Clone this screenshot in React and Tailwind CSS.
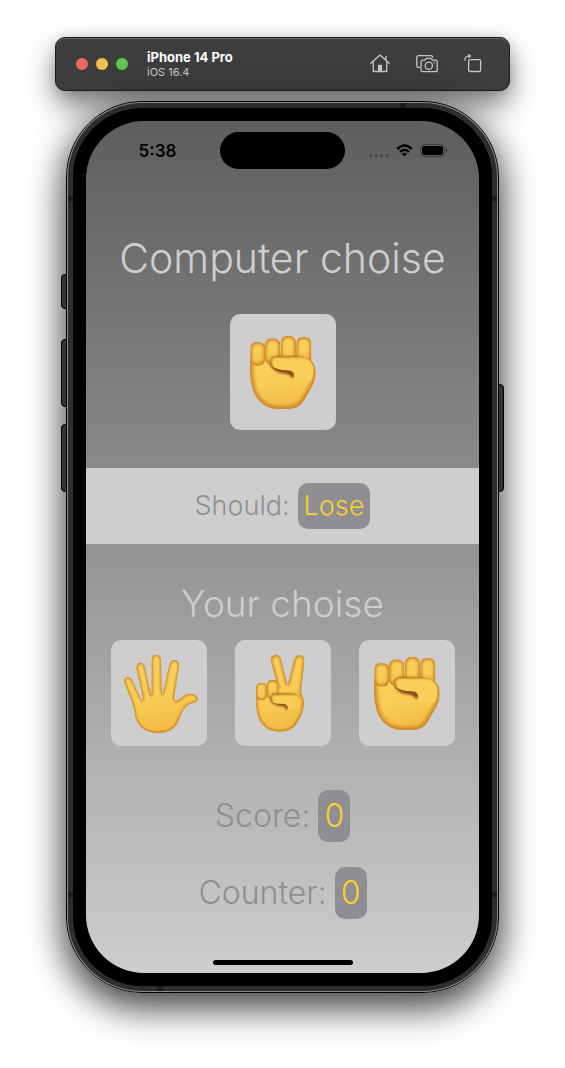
import { useId } from "react";

function Blob({ d, shade = 9 }) {
  const id = useId();
  return (
    <g>
      <defs>
        <clipPath id={`${id}c`}>
          <path d={d} />
        </clipPath>
        <linearGradient id={`${id}g`} x1="0" y1="0" x2="0.25" y2="1">
          <stop offset="0" stopColor="#fbd35c" />
          <stop offset="0.6" stopColor="#f8cd55" />
          <stop offset="1" stopColor="#f3bd45" />
        </linearGradient>
        <filter id={`${id}b`} x="-20%" y="-20%" width="140%" height="140%">
          <feGaussianBlur stdDeviation={shade / 2} />
        </filter>
      </defs>
      <path d={d} fill={`url(#${id}g)`} />
      <g clipPath={`url(#${id}c)`}>
        <path d={d} fill="none" stroke="#c07420" strokeWidth={shade} filter={`url(#${id}b)`} />
        <path d={d} fill="none" stroke="#c98324" strokeWidth="2" opacity="0.5" />
      </g>
    </g>
  );
}

function Thumb({ d, top, crease, from, to }) {
  const id = useId();
  return (
    <g>
      <defs>
        <filter id={`${id}b`} x="-40%" y="-80%" width="180%" height="260%">
          <feGaussianBlur stdDeviation="2.5" />
        </filter>
        <linearGradient id={`${id}g`} gradientUnits="userSpaceOnUse" x1={from} y1="0" x2={to} y2="0">
          <stop offset="0" stopColor="#f9cf59" />
          <stop offset="1" stopColor="#f9cf59" stopOpacity="0" />
        </linearGradient>
        <linearGradient id={`${id}s`} gradientUnits="userSpaceOnUse" x1={from} y1="0" x2={to} y2="0">
          <stop offset="0" stopColor="#a9651c" />
          <stop offset="1" stopColor="#c98324" stopOpacity="0.5" />
        </linearGradient>
      </defs>
      <path d={crease} fill="#8f4a12" filter={`url(#${id}b)`} />
      <path d={d} fill={`url(#${id}g)`} />
      <path d={top} fill="none" stroke={`url(#${id}s)`} strokeWidth="4" filter={`url(#${id}b)`} />
      <path d={top} fill="none" stroke={`url(#${id}s)`} strokeWidth="2" opacity="0.8" />
    </g>
  );
}

function Rock() {
  return (
    <svg viewBox="52 66 240 240" className="size-20" aria-hidden="true">
      <Blob shade={14} d="M73 138C72 190 74 225 86 250C100 280 124 297 160 297H184C214 297 228 286 240 262C256 236 270 216 270 187C269 166 262 153 248 146L230 130H90Z" />
      <Blob d="M212 103Q212 81 234 81Q257 81 257 103V148Q256 160 240 160H228Q212 158 212 142Z" />
      <Blob d="M165 101Q165 77 188 77Q211 77 211 101V146Q211 160 188 160Q165 160 165 146Z" />
      <Blob d="M118 108Q118 85 141 85Q164 85 164 108V145Q164 163 141 166Q119 163 118 145Z" />
      <Blob d="M74 117Q74 96 96 96Q119 96 119 117V144Q119 166 98 167Q74 166 74 144Z" />
      <path d="M150 142H226Q254 146 262 168Q266 190 256 214H206Q206 190 190 180Z" fill="#f9cf59" />
      <Thumb
        d="M140 168Q132 156 136 147Q141 140 151 140H222Q240 142 250 150L236 205H206Q210 182 187 181Q155 181 140 168Z"
        top="M140 168Q132 156 136 147Q141 140 151 140H222Q244 142 253 150"
        crease="M132 164Q144 184 168 190Q190 190 200 204Q208 203 207 190Q202 179 187 178Z"
        from={205}
        to={245}
      />
    </svg>
  );
}

function Paper() {
  return (
    <svg viewBox="41 52 240 240" className="size-20" aria-hidden="true">
      <Blob
        shade={6}
        d="M90 245Q88 220 80 198L58 143Q53 128 66 125Q76 124 81 135L105 186Q108 193 112 194Q114 192 112 184L94 100Q91 84 104 81Q116 81 119 94L136 175Q138 181 139 173V72Q140 57 153 57Q166 57 167 72L169 166Q170 180 173 171L193 86Q197 71 210 73Q223 77 221 92L207 180Q205 194 213 195Q219 195 227 187Q242 173 258 174Q278 179 278 190Q277 200 262 202Q239 208 228 234Q222 250 216 262Q202 292 155 292Q104 290 90 245Z"
      />
    </svg>
  );
}

function Scissors() {
  return (
    <svg viewBox="38 52 240 240" className="size-20" aria-hidden="true">
      <Blob
        shade={8}
        d="M84 245Q76 220 77 178L100 165L143 155L122 78Q119 61 134 57Q147 56 152 70L169 139Q172 152 175 139L191 73Q195 58 209 58Q223 61 222 76L212 172Q224 190 220 212Q218 234 202 258Q188 288 145 288Q101 287 84 245Z"
      />
      <Blob shade={7} d="M109 150Q109 133 127 133Q145 133 145 150V175Q144 190 127 190Q110 190 109 175Z" />
      <Blob shade={7} d="M77 158Q77 141 94 141Q110 141 110 158V177Q109 193 94 194Q77 193 77 177Z" />
      <Thumb
        d="M126 198Q118 186 124 179Q129 175 137 175H188Q203 177 212 188L200 222H173Q175 206 160 204Q136 206 126 198Z"
        top="M126 198Q118 186 124 179Q129 175 137 175H188Q203 177 212 188"
        crease="M118 193Q128 208 148 211Q164 210 170 223Q175 222 174 210Q170 202 160 200Z"
        from={175}
        to={208}
      />
    </svg>
  );
}

function HomeIcon() {
  return (
    <svg width="20" height="20" viewBox="0 0 20 20" fill="none" stroke="#c6c6c6" strokeWidth="1.3" strokeLinecap="round" strokeLinejoin="round" aria-hidden="true">
      <path d="M.8 9.3 10 .9 19.2 9.3M3.3 7.8V17.5H16.7V7.8M16 5.6V2.4" />
      <path d="M8 17.5V10.8H12V17.5Z" fill="#c6c6c6" stroke="none" />
    </svg>
  );
}

function CameraIcon() {
  return (
    <svg width="22" height="20" viewBox="0 0 22 20" fill="none" stroke="#c6c6c6" strokeWidth="1.3" strokeLinecap="round" strokeLinejoin="round" aria-hidden="true">
      <path d="M3.5 13.3H2.2Q.8 13.3.8 11.7V3.3Q.8 1.7 2.4 1.7H15.2Q16.6 1.7 16.8 3.1" />
      <path d="M6.8 6.1H9L10.3 4.3H15.1L16.4 6.1H19.3Q21.2 6.1 21.2 7.9V15.9Q21.2 17.7 19.3 17.7H6.8Q5 17.7 5 15.9V7.9Q5 6.1 6.8 6.1Z" />
      <circle cx="12.8" cy="11.8" r="3.6" />
      <circle cx="18" cy="8.8" r=".7" fill="#c6c6c6" stroke="none" />
    </svg>
  );
}

function RotateIcon() {
  return (
    <svg width="18" height="20" viewBox="0 0 18 20" fill="none" stroke="#c6c6c6" strokeWidth="1.3" strokeLinecap="round" strokeLinejoin="round" aria-hidden="true">
      <rect x="4.6" y="5.7" width="12" height="11.8" rx="1.4" />
      <path d="M.8 6.2Q.8 2.2 5.6 1.9" />
      <path d="M4.6.2 7.2 1.9 4.8 4Z" fill="#c6c6c6" strokeWidth=".5" />
    </svg>
  );
}

function StatusIcons() {
  return (
    <div className="flex items-center gap-[7px]">
      <svg width="20" height="14" viewBox="0 0 20 14" fill="#4a4a4a" aria-hidden="true">
        <circle cx="2" cy="11.5" r="1.7" />
        <circle cx="7.3" cy="11.5" r="1.7" />
        <circle cx="12.7" cy="11.5" r="1.7" />
        <circle cx="18" cy="11.5" r="1.7" />
      </svg>
      <svg width="17" height="13" viewBox="0 0 17 13" aria-label="Wi-Fi">
        <path d="M1.2 5Q8.5-1.8 15.8 5" fill="none" stroke="#000" strokeWidth="2.4" />
        <path d="M4 7.9Q8.5 3.9 13 7.9" fill="none" stroke="#000" strokeWidth="2.3" />
        <path d="M5.9 9.9Q8.5 7.8 11.1 9.9L8.5 12.6Z" />
      </svg>
      <svg width="28" height="13" viewBox="0 0 28 13" aria-label="Battery">
        <rect x=".6" y=".6" width="24" height="11.8" rx="3.8" fill="none" stroke="#000" strokeOpacity=".4" />
        <rect x="2.1" y="2.1" width="21" height="8.8" rx="2.5" />
        <path d="M26 4.5V8.5Q27.3 8 27.3 6.5T26 4.5Z" fillOpacity=".45" />
      </svg>
    </div>
  );
}

function Toolbar() {
  return (
    <header className="flex w-full max-w-[455px] items-center rounded-[10px] border border-[#1c1c1c] bg-[#3d3d3d] py-[11px] pr-[27px] pl-5 shadow-[inset_0_1px_0_#666,0_0_12px_rgba(0,0,0,0.12),0_14px_28px_rgba(0,0,0,0.5)]">
      <div className="flex gap-2">
        <button type="button" aria-label="Close" className="size-3 rounded-full bg-[#ed6a5e]" />
        <button type="button" aria-label="Minimize" className="size-3 rounded-full bg-[#f5bf4f]" />
        <button type="button" aria-label="Zoom" className="size-3 rounded-full bg-[#61c554]" />
      </div>
      <div className="ml-[19px] flex-1">
        <h1 className="text-[13px] leading-4 font-bold text-white">iPhone 14 Pro</h1>
        <p className="text-[11px] leading-[14px] text-[#c9c9c9]">iOS 16.4</p>
      </div>
      <div className="flex items-center gap-[26px]">
        <button type="button" aria-label="Home"><HomeIcon /></button>
        <button type="button" aria-label="Screenshot"><CameraIcon /></button>
        <button type="button" aria-label="Rotate"><RotateIcon /></button>
      </div>
    </header>
  );
}

function Stat({ label, value }) {
  return (
    <p className="flex items-center justify-center gap-2 text-[32px] leading-[52px] font-light text-[#8e8e93]">
      {label}
      <span className="rounded-[10px] bg-[#8e8e93] px-1.5 text-[#fbd02f]">{value}</span>
    </p>
  );
}

const choices = [
  { name: "Paper", Icon: Paper },
  { name: "Scissors", Icon: Scissors },
  { name: "Rock", Icon: Rock },
];

function GameScreen() {
  return (
    <main className="flex flex-col items-center overflow-hidden rounded-[58px] bg-linear-to-b from-[#5e5e5e] to-[#cecece] pb-2">
      <div className="grid w-full grid-cols-[1fr_125px_1fr] items-center pt-[11px]">
        <time className="pl-[9px] text-center text-[17px] leading-5 font-semibold text-black">5:38</time>
        <div className="h-[37px] rounded-full bg-black" />
        <div className="flex justify-center pr-2"><StatusIcons /></div>
      </div>
      <h2 className="mt-[63px] text-[41px] leading-[52px] font-light text-[#cecece]">Computer choise</h2>
      <div role="img" aria-label="Rock" className="mt-[30px] rounded-[10px] bg-[#cecece] px-[13px] py-[18px]">
        <Rock />
      </div>
      <p className="mt-[38px] flex w-full items-center justify-center gap-2 bg-[#cecece] py-[15px] text-[27px] leading-[46px] font-light text-[#8e8e93]">
        Should:
        <span className="rounded-[10px] bg-[#8e8e93] px-1.5 text-[#fbd02f]">Lose</span>
      </p>
      <h2 className="mt-9 text-[37px] leading-[48px] font-light text-[#cecece]">Your choise</h2>
      <div className="mt-3 flex gap-7">
        {choices.map(({ name, Icon }) => (
          <button key={name} type="button" aria-label={name} className="rounded-[10px] bg-[#cecece] px-2 py-[13px]">
            <Icon />
          </button>
        ))}
      </div>
      <div className="mt-11 flex flex-col gap-[25px]">
        <Stat label="Score:" value={0} />
        <Stat label="Counter:" value={0} />
      </div>
      <div className="mt-[41px] h-[5px] w-[140px] rounded-full bg-black" />
    </main>
  );
}

export default function App() {
  return (
    <div className="flex min-h-screen flex-col items-center gap-[10px] overflow-hidden bg-white px-5 pt-[37px] pb-[75px] font-[Inter,'Liberation_Sans',sans-serif]">
      <Toolbar />
      <div className="relative w-full max-w-[433px] rounded-[76px] shadow-[0_0_36px_rgba(0,0,0,0.3),0_16px_36px_rgba(0,0,0,0.65)]">
        <span className="absolute top-[173px] -left-[5px] h-[35px] w-2 rounded-sm border border-black bg-[#333]" />
        <span className="absolute top-[238px] -left-[5px] h-[68px] w-2 rounded-sm border border-black bg-[#333]" />
        <span className="absolute top-[323px] -left-[5px] h-[68px] w-2 rounded-sm border border-black bg-[#333]" />
        <span className="absolute top-[283px] -right-[5px] h-[108px] w-2 rounded-sm border border-black bg-[#333]" />
        <div className="relative rounded-[76px] border border-black bg-[#8a8a8a] p-px">
          <div className="relative rounded-[74px] bg-[#2d2d2d] p-[5px]">
            <span className="absolute top-0 right-[91px] h-full w-1.5 bg-[#1d1d1d] [clip-path:inset(0_0_50%_0)]" />
            <span className="absolute top-0 left-[89px] h-full w-1.5 bg-[#1d1d1d] [clip-path:inset(50%_0_0_0)]" />
            <span className="absolute top-[93px] left-0 h-1.5 w-full bg-[#1d1d1d]" />
            <span className="absolute bottom-[93px] left-0 h-1.5 w-full bg-[#1d1d1d]" />
            <div className="relative rounded-[69px] bg-black p-[13px]">
              <GameScreen />
            </div>
          </div>
        </div>
      </div>
    </div>
  );
}
